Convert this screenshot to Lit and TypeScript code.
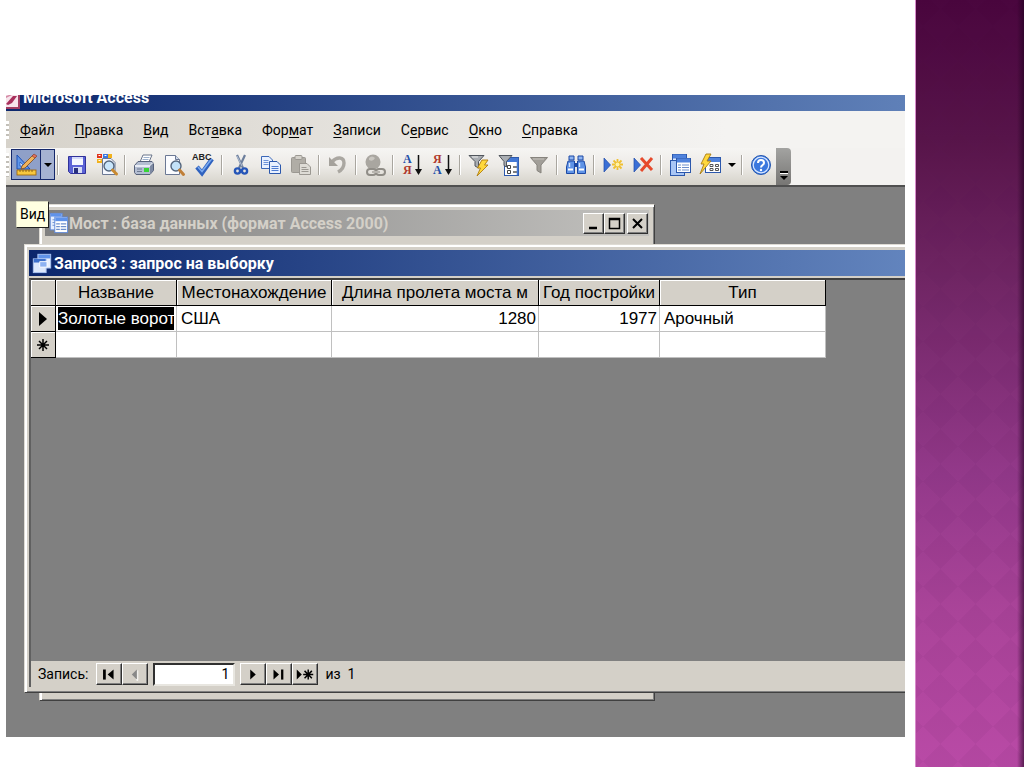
import { LitElement, html, svg, css, nothing } from "lit";
import { customElement } from "lit/decorators.js";

const grey = "#9b9892";

const icons: Record<string, unknown> = {
  design: svg`<path d="M3 2V16H16Z" fill="#5f97ea" stroke="#1c4fb4"/><path d="M6 9V13H10Z" fill="#d8e8ff" stroke="#1c4fb4" stroke-width=".7"/><path d="M8 13L19 2L22 4L11 15L7 16Z" fill="#f0b45c" stroke="#7a4a20" stroke-width=".8"/><path d="M18 3L20 1L23 3L21 5Z" fill="#e0705c" stroke="#803828" stroke-width=".6"/><rect x="3" y="17" width="19" height="5" fill="#f7c840" stroke="#a06a10" stroke-width=".9"/><path d="M6 17v2M9 17v2M12 17v2M15 17v2M18 17v2" stroke="#7a5010" stroke-width=".8"/>`,
  save: svg`<path d="M3.500 3.500H20.500V20.500H5.500L3.500 18.500Z" fill="#5b62d6" stroke="#30329a"/><rect x="7" y="4" width="11" height="8" fill="#f4f6ff"/><path d="M7 5h11" stroke="#b4bdf2"/><rect x="8" y="14" width="9" height="6" fill="#d5dbf5"/><rect x="9" y="15" width="4" height="5" fill="#28307e"/>`,
  fileSearch: svg`<path d="M7.500 5.500H16L20 9.500V21.500H7.500Z" fill="#f5f8ff" stroke="#6b7894"/><rect x="2" y="1" width="5" height="4" fill="#e0341c"/><rect x="8" y="1" width="5" height="4" fill="#3c78e0"/><rect x="2" y="6" width="5" height="4" fill="#f2b21c"/><rect x="13" y="1" width="4" height="4" fill="#f2b21c"/><path d="M3.500 2.500h2M3.500 7.500h2M9.500 2.500h2" stroke="#fff"/><circle cx="14" cy="13" r="5" fill="#c9e6fb" stroke="#53657d" stroke-width="1.400"/><path d="M17.500 17L21.500 21" stroke="#c98a30" stroke-width="3" stroke-linecap="round"/>`,
  print: svg`<path d="M8 9L11 2H20L17 9" fill="#fff" stroke="#69748a"/><path d="M11.500 4.500h6M10.500 6.500h6" stroke="#9cb0cc"/><path d="M2.500 12.500L6 8.500H20L21.500 10.500V17.500L18 21.500H4L2.500 19.500Z" fill="#b4bed2" stroke="#56617a"/><path d="M3 13H18L21 10" fill="none" stroke="#f9fbff" stroke-width="1.400"/><path d="M18 13V21L21 17.500V10Z" fill="#7d89a2"/><rect x="12" y="15" width="5" height="4" fill="#37d437"/><path d="M5 16h5M5 18.500h5" stroke="#6f7b92"/>`,
  preview: svg`<path d="M3.500 2.500H13.500L17.500 6.500V21.500H3.500Z" fill="#fbfcff" stroke="#6b7894"/><path d="M13.500 2.500V6.500H17.500" fill="#cfd9ea" stroke="#6b7894"/><circle cx="14" cy="13" r="5" fill="#c2e1f8" stroke="#53657d" stroke-width="1.400"/><path d="M17.500 17L21.500 21.500" stroke="#c07f38" stroke-width="3" stroke-linecap="round"/>`,
  spell: svg`<path d="M5 14L10 20L20 6" fill="none" stroke="#2f62bf" stroke-width="4.500"/><path d="M6 14L10 18.500L19.500 6" fill="none" stroke="#7baaf0" stroke-width="1.600"/><text x="0" y="7" font-size="9" font-weight="700" font-family="Liberation Sans, sans-serif" fill="#222">ABC</text>`,
  cut: svg`<path d="M8 2L14 15M16 2L10 15" stroke="#6d7f9c" stroke-width="2.200"/><path d="M8 3L13 13" stroke="#c6d2e4" stroke-width=".8"/><circle cx="8.500" cy="18" r="2.600" fill="none" stroke="#2656b8" stroke-width="2.400"/><circle cx="15.500" cy="18" r="2.600" fill="none" stroke="#2656b8" stroke-width="2.400"/>`,
  copy: svg`<path d="M2.500 3.500H10L13.500 7V15.500H2.500Z" fill="#e9f1ff" stroke="#3c68b8"/><path d="M4.500 7.500h5M4.500 9.500h5M4.500 11.500h5" stroke="#6d93d8"/><path d="M10.500 8.500H18L21.500 12V20.500H10.500Z" fill="#e9f1ff" stroke="#2c58ac"/><path d="M12.500 13.500h7M12.500 15.500h7M12.500 17.500h7" stroke="#4f7cd0"/>`,
  paste: svg`<rect x="2.500" y="4.500" width="14" height="15" rx="1" fill="#b0ada6" stroke="${grey}"/><rect x="6" y="2.500" width="7" height="4" rx="1" fill="#d4d1ca" stroke="${grey}"/><path d="M10.500 10.500H18L21.500 14V21.500H10.500Z" fill="#dedcd6" stroke="${grey}"/><path d="M12.500 14.500h5M12.500 16.500h7M12.500 18.500h7" stroke="${grey}"/>`,
  undo: svg`<path d="M6 9C11 3 18 4 18 10C18 14 16 17 12 19" fill="none" stroke="#aaa7a1" stroke-width="3.400"/><path d="M3 4V13H12Z" fill="#a5a29c"/>`,
  link: svg`<circle cx="10" cy="9" r="7.500" fill="#a9a6a0"/><path d="M6 5q3-3 6 0q-2 4-6 2z" fill="#c9c6c0"/><rect x="4" y="16" width="9" height="6" rx="3" fill="none" stroke="#908d87" stroke-width="2"/><rect x="13" y="16" width="9" height="6" rx="3" fill="none" stroke="#908d87" stroke-width="2"/><path d="M9 19h8" stroke="#b8b5af" stroke-width="2"/>`,
  sortAsc: svg`<text x="3" y="10" font-size="12" font-weight="700" font-family="Liberation Serif, serif" fill="#244fa8">А</text><text x="3" y="21" font-size="12" font-weight="700" font-family="Liberation Serif, serif" fill="#b0382e">Я</text><path d="M18.500 2V20" stroke="#111" stroke-width="1.500"/><path d="M15 16H22L18.500 22Z" fill="#111"/>`,
  sortDesc: svg`<text x="3" y="10" font-size="12" font-weight="700" font-family="Liberation Serif, serif" fill="#b0382e">Я</text><text x="3" y="21" font-size="12" font-weight="700" font-family="Liberation Serif, serif" fill="#244fa8">А</text><path d="M18.500 2V20" stroke="#111" stroke-width="1.500"/><path d="M15 16H22L18.500 22Z" fill="#111"/>`,
  filterSel: svg`<path d="M2 2.500H17L11.500 8.500V15L8 13V8.500Z" fill="#a9adb2" stroke="#50555c"/><path d="M5 4h6" stroke="#eee"/><path d="M15 7H21L17.500 12H21L10 23L13.500 15H10.500Z" fill="#ffd83c" stroke="#b07d10" stroke-width=".9"/>`,
  filterForm: svg`<rect x="7.500" y="4.500" width="14" height="18" fill="#fff" stroke="#2c58ac"/><path d="M8 7H21" stroke="#4478d4" stroke-width="4"/><path d="M10.500 12.500h3v3h-3zM10.500 17.500h3v3h-3z" fill="none" stroke="#444"/><path d="M16 14h4M16 19h4" stroke="#555" stroke-width="1.500"/><path d="M20.500 5v17" stroke="#4478d4" stroke-width="1.500"/><path d="M2 2.500H15L9.500 8.500V14L7 12.500V8.500Z" fill="#a9adb2" stroke="#50555c"/>`,
  funnel: svg`<path d="M3.500 4.500H20.500L14 12V20L10 17.500V12Z" fill="#a19e98" stroke="#86837d"/><path d="M6 6H17" stroke="#c5c2bc"/>`,
  find: svg`<path d="M5 3h5v4h-5zM14 3h5v4h-5z" fill="#8db4f2" stroke="#1d49a4"/><path d="M4 8H10.500V20.500H2.500V14ZM13.500 8H20L21.500 14V20.500H13.500Z" fill="#5f93e6" stroke="#1d49a4"/><rect x="10" y="10" width="4" height="4" fill="#1d49a4"/><path d="M4 16.500h5M15 16.500h5" stroke="#fff" stroke-width="2"/><path d="M5.500 10v4M15.500 10v4" stroke="#d8e7ff" stroke-width="1.400"/>`,
  newRec: svg`<path d="M3 5L9.500 12L3 19Z" fill="#3a6fd6" stroke="#1f4ba8" stroke-width=".7"/><path d="M16.500 6V17M11 11.500H22M12.500 7.500L20.500 15.500M20.500 7.500L12.500 15.500" stroke="#efc030" stroke-width="1.800"/><circle cx="16.500" cy="11.500" r="2" fill="#fff3a8"/>`,
  delRec: svg`<path d="M3 5L9.500 12L3 19Z" fill="#3a6fd6" stroke="#1f4ba8" stroke-width=".7"/><path d="M10 5L21 17M21 5L10 18" stroke="#e64a2c" stroke-width="3"/>`,
  dbWin: svg`<rect x="4.500" y="1.500" width="14" height="15" fill="#dce8fc" stroke="#2c58ac"/><path d="M5 3.500h13" stroke="#4f82dc" stroke-width="4"/><rect x="2.500" y="7.500" width="14" height="15" fill="#a9c6f5" stroke="#2c58ac"/><rect x="8.500" y="5.500" width="14" height="14" fill="#fff" stroke="#2c58ac"/><path d="M9 7.500h13" stroke="#4f82dc" stroke-width="4"/><path d="M10 12h3M14 12h7M10 14.500h3M14 14.500h7M10 17h3M14 17h7" stroke="#6c8fcc"/>`,
  newObj: svg`<rect x="7.500" y="4.500" width="15" height="15" fill="#fff" stroke="#2c58ac"/><path d="M8 7h14" stroke="#4f82dc" stroke-width="4"/><path d="M12 11.500h3v2h-3zM12 15.500h3v2h-3zM17.500 11.500h3v2h-3zM17.500 15.500h3v2h-3z" fill="none" stroke="#555"/><path d="M8 1H13L9 8H13L2 21L6 11H3Z" fill="#ffd83c" stroke="#a87a12" stroke-width=".9"/>`,
  help: svg`<circle cx="12" cy="12" r="9.500" fill="#3b78de" stroke="#2456ae"/><circle cx="12" cy="12" r="7.800" fill="none" stroke="#dce9ff" stroke-width="1.200"/><path d="M9 10C9 6 15 6 15 10C15 12 12 12 12 14.500" fill="none" stroke="#fff" stroke-width="2"/><circle cx="12" cy="17" r="1.200" fill="#fff"/>`,
  dbDoc: svg`<rect x="3.500" y="1.500" width="13" height="18" fill="#e6effe" stroke="#5b86d8"/><path d="M4 3.500h12" stroke="#5f93ea" stroke-width="3"/><path d="M6 8.500h3M6 11.500h3M6 14.500h3" stroke="#6c8fcc"/><rect x="8.500" y="5.500" width="14" height="17" fill="#fff" stroke="#5b86d8"/><path d="M9 8h13" stroke="#5f93ea" stroke-width="4"/><path d="M10 13h4M15 13h6M10 16h4M15 16h6M10 19h4M15 19h6" stroke="#6c8fcc" stroke-width="1.500"/>`,
  query: svg`<rect x="7.500" y="2.500" width="14" height="15" fill="#e8f0fe" stroke="#a9c4f3"/><path d="M8 5h13" stroke="#5f93ea" stroke-width="4"/><rect x="2.500" y="7.500" width="14" height="15" fill="#dce8fc" stroke="#a9c4f3"/><path d="M3 9.500h13" stroke="#3d70cc" stroke-width="4"/><path d="M9.500 10.500h8v6h-8z" fill="#8db2f2" stroke="#fff"/>`,
  first: svg`<path d="M7 6v11" stroke="#000" stroke-width="3"/><path d="M17 6V17L10.500 11.500Z"/>`,
  prev: svg`<path d="M14 6V17L8.500 11.500Z" fill="#888"/><path d="M15 7V18L13 17" fill="none" stroke="#fff"/>`,
  next: svg`<path d="M9 6V17L15 11.500Z"/>`,
  last: svg`<path d="M6 6V17L12 11.500Z"/><path d="M15.500 6v11" stroke="#000" stroke-width="2.500"/>`,
  fresh: svg`<path d="M3 6V17L8.500 11.500Z"/><path d="M15.500 6v11M10 11.500h11M11.500 7.500l8 8M19.500 7.500l-8 8" stroke="#000" stroke-width="1.600"/>`,
};

const icon = (name: string, size = 24) =>
  html`<svg class="icon" width=${size} height=${size} viewBox="0 0 24 24" aria-hidden="true">${icons[name]}</svg>`;

const menu: [string, string, string][] = [
  ["", "Ф", "айл"],
  ["", "П", "равка"],
  ["", "В", "ид"],
  ["Вст", "а", "вка"],
  ["Фор", "м", "ат"],
  ["", "З", "аписи"],
  ["С", "е", "рвис"],
  ["", "О", "кно"],
  ["", "С", "правка"],
];

const groups: [string, string][][] = [
  [["save", "Сохранить"], ["fileSearch", "Поиск файлов"]],
  [["print", "Печать"], ["preview", "Просмотр"], ["spell", "Орфография"]],
  [["cut", "Вырезать"], ["copy", "Копировать"], ["paste", "Вставить"]],
  [["undo", "Отменить"]],
  [["link", "Гиперссылка"]],
  [["sortAsc", "По возрастанию"], ["sortDesc", "По убыванию"]],
  [["filterSel", "Фильтр по выделенному"], ["filterForm", "Изменить фильтр"], ["funnel", "Применить фильтр"]],
  [["find", "Найти"]],
  [["newRec", "Новая запись"], ["delRec", "Удалить запись"]],
  [["dbWin", "Окно базы данных"], ["newObj", "Новый объект"]],
];

@customElement("app-root")
export class AppRoot extends LitElement {
  static styles = css`
    :host {
      display: block;
      font-family: Roboto, "Noto Sans", sans-serif;
      font-size: 14px;
      color: #000;
    }
    * { box-sizing: border-box; }
    button, input { font: inherit; color: inherit; margin: 0; padding: 0; border-radius: 0; }
    button { background: none; border: 0; }
    .icon { display: block; flex: none; overflow: visible; }
    .slide {
      display: grid;
      grid-template-columns: minmax(0, 1fr) 109px;
      height: 100vh;
      background: #fff;
    }
    .stage { display: flex; padding: 95px 10px 30px 6px; }
    .access {
      flex: 1;
      min-width: 0;
      display: flex;
      flex-direction: column;
      overflow: hidden;
      background: #808080;
    }
    .side { position: relative; background: linear-gradient(#49053d, #571449 18%, #6f2563 36%, #93398a 62%, #aa4499 80%, #b94aa6); border-left: 1px solid #d88acb; }
    .weave { display: block; width: 100%; height: 100%; }
    .shade { position: absolute; top: 0; right: 0; bottom: 0; width: 7px; background: linear-gradient(90deg, transparent, rgba(30, 0, 30, 0.6)); }

    .apptitle {
      display: flex;
      gap: 3px;
      flex: none;
      height: 16px;
      overflow: hidden;
      color: #fff;
      font-size: 16px;
      font-weight: 700;
      background: linear-gradient(90deg, #0c276c, #5f80b8);
    }
    .apptitle .name { line-height: 6px; }
    .menubar {
      display: flex;
      align-items: center;
      gap: 20px;
      flex: none;
      height: 37px;
      padding-left: 14px;
      background: linear-gradient(90deg, #d6d2ca, #f4f3f1 80%);
      position: relative;
    }
    .grip { width: 3px; height: 18px; background: repeating-linear-gradient(#fff 0 3px, #c2bfb8 3px 5px); flex: none; }
    .menubar .grip { position: absolute; left: 0; }
    .menubar u { text-underline-offset: 2px; }
    .barrow { flex: none; height: 39px; background: #f3f2f0; border-bottom: 2px solid #505050; display: flex; }
    .toolbar {
      display: flex;
      align-items: center;
      padding-bottom: 4px;
      background: linear-gradient(#f6f5f3, #eceae6 50%, #d5d2ca);
      border-radius: 0 4px 4px 0;
    }
    .toolbar .grip { margin-right: 2px; height: 24px; }
    .view { display: flex; height: 31px; border: 1px solid #15286b; background: #8fa0c8; }
    .view button { display: grid; place-items: center; width: 28px; }
    .view .drop { width: 14px; border-left: 1px solid #15286b; background: #a5b2d2; }
    .caret { border: 4px solid transparent; border-top-color: #000; border-bottom: 0; }
    .tool { display: grid; place-items: center; width: 30px; height: 30px; }
    .sep { width: 2px; height: 20px; margin: 0 3px 0 2px; background: linear-gradient(90deg, #a9a69f 50%, #fff 50%); }
    .drop.plain { width: 14px; display: grid; place-items: center; height: 30px; }
    .cap {
      align-self: stretch;
      width: 15px;
      margin-bottom: -4px;
      background: linear-gradient(#a3a3a1, #777674);
      border-radius: 0 4px 4px 0;
      display: flex;
      flex-direction: column;
      justify-content: flex-end;
      align-items: center;
      gap: 2px;
      padding-bottom: 5px;
    }
    .cap i { width: 8px; height: 2px; background: #000; border-bottom: 1px solid #fff; box-sizing: content-box; }

    .desk { position: relative; flex: 1; min-height: 0; }
    .win {
      position: absolute;
      display: flex;
      flex-direction: column;
      background: #d4d0c8;
      border: 1px solid;
      border-color: #dedbd4 #404040 #404040 #dedbd4;
      box-shadow: inset 2px 2px #fff, inset -1px -1px #808080;
    }
    .db { left: 33px; top: 17px; bottom: 36px; width: 616px; padding: 5px; }
    .query { left: 18px; right: -60px; top: 57px; bottom: 44px; padding: 5px 3px 5px 4px; }
    .bar { display: flex; align-items: center; height: 26px; flex: none; font-weight: 700; white-space: nowrap; }
    .bar h2 { margin: 0; font-size: 16px; flex: 1; }
    .db .bar { background: linear-gradient(90deg, #808080, #c2c1be); color: #d4d0c8; padding: 0 1px 0 2px; }
    .query .bar { background: linear-gradient(90deg, #0b266c, #6486bf 96%); color: #fff; padding-left: 2px; gap: 1px; }
    .boxes { display: flex; }
    .face {
      display: grid;
      place-items: center;
      background: #d4d0c8;
      border: 1px solid;
      border-color: #fff #303030 #303030 #fff;
      box-shadow: inset -1px -1px #808080;
    }
    .boxes .face { width: 21px; height: 21px; }
    .boxes .face:last-child { margin-left: 2px; }
    .client {
      flex: 1;
      min-height: 0;
      display: flex;
      flex-direction: column;
      margin-top: 2px;
      background: #808080;
      border-left: 2px solid #606060;
      border-top: 2px solid #404040;
    }
    .sheet { flex: 1; min-height: 0; }
    table {
      border-collapse: separate;
      border-spacing: 0;
      table-layout: fixed;
      width: 795px;
      font-family: "Liberation Sans", sans-serif;
      font-size: 17px;
      line-height: 23px;
    }
    th, td { height: 26px; padding: 0 2px 0 4px; overflow: hidden; white-space: nowrap; }
    th { font-weight: 400; background: #d4d0c8; padding: 0 2px; border-right: 1px solid #000; border-bottom: 1px solid #000; box-shadow: inset 1px 1px #fff; }
    td { background: #fff; text-align: left; border-right: 1px solid #c0c0c0; border-bottom: 1px solid #c0c0c0; }
    td.num { text-align: right; }
    td.on { padding: 0 2px; }
    td.on span { display: block; background: #000; color: #fff; overflow: hidden; }
    th svg { display: block; margin: auto; }
    .sel { width: 25px; }
    .c1 { width: 121px; }
    .c2 { width: 155px; }
    .c3 { width: 207px; }
    .c4 { width: 121px; }
    .c5 { width: 166px; }
    .nav { display: flex; align-items: center; flex: none; height: 26px; background: #d4d0c8; padding-left: 7px; }
    .nav label { margin-right: 8px; }
    .nav .face { width: 26px; height: 22px; }
    .nav input {
      width: 82px;
      height: 23px;
      margin: 0 5px;
      padding-right: 4px;
      text-align: right;
      background: #fff;
      border: 2px solid;
      border-color: #303030 #e8e6e0 #e8e6e0 #303030;
    }
    .nav .of { margin-left: 7px; }
    .tip {
      position: absolute;
      left: 10px;
      top: 14px;
      padding: 0 3px;
      line-height: 25px;
      background: #ffffe1;
      border: 1px solid;
      border-color: #d8d8c0 #202020 #202020 #d8d8c0;
    }
  `;

  render() {
    const heads = ["Название", "Местонахождение", "Длина пролета моста м", "Год постройки", "Тип"];
    return html`
      <div class="slide">
        <div class="stage">
          <section class="access" aria-label="Microsoft Access">
            <header class="apptitle">
              <svg class="applogo" width="14" height="14" viewBox="0 0 14 14" aria-hidden="true">
                <rect width="14" height="14" fill="#a23c62" /><rect width="12" height="12" fill="#f6e3ea" />
                <path d="M0 9L7 1H11L6 8L2 10Z" fill="#a8305c" /><path d="M0 3L6 0H3L0 1Z" fill="#d48aa6" />
              </svg>
              <span class="name">Microsoft Access</span>
            </header>
            <nav class="menubar">
              <span class="grip"></span>
              ${menu.map(([a, k, b]) => html`<button>${a}<u>${k}</u>${b}</button>`)}
            </nav>
            <div class="barrow">
              <div class="toolbar">
                <span class="grip"></span>
                <span class="view">
                  <button aria-label="Вид">${icon("design")}</button>
                  <button class="drop" aria-label="Выбор вида"><span class="caret"></span></button>
                </span>
                ${groups.map(
                  (g) => html`<span class="sep"></span>${g.map(
                      ([n, l]) => html`<button class="tool" aria-label=${l}>${icon(n)}</button>`
                    )}`
                )}
                <button class="drop plain" aria-label="Другие объекты"><span class="caret"></span></button>
                <span class="sep"></span>
                <button class="tool" aria-label="Справка">${icon("help")}</button>
                <button class="cap" aria-label="Параметры панели"><i></i><span class="caret"></span></button>
              </div>
            </div>
            <div class="desk">
              <section class="win db">
                <div class="bar">
                  ${icon("dbDoc", 22)}
                  <h2>Мост : база данных (формат Access 2000)</h2>
                  <span class="boxes">
                    <button class="face" aria-label="Свернуть"><svg width="15" height="15"><path d="M3 12h8" stroke="#000" stroke-width="2.500" /></svg></button>
                    <button class="face" aria-label="Развернуть"><svg width="15" height="15"><path d="M2.500 2.500h10v10h-10zM2 3.500h11" fill="none" stroke="#000" stroke-width="1.500" /></svg></button>
                    <button class="face" aria-label="Закрыть"><svg width="15" height="15"><path d="M3 3L12 12M12 3L3 12" stroke="#000" stroke-width="2" /></svg></button>
                  </span>
                </div>
              </section>
              <section class="win query">
                <div class="bar">${icon("query", 22)}<h2>Запрос3 : запрос на выборку</h2></div>
                <div class="client">
                  <div class="sheet">
                    <table>
                      <thead>
                        <tr>
                          <th class="sel"></th>
                          ${heads.map((h, i) => html`<th class="c${i + 1}" scope="col">${h}</th>`)}
                        </tr>
                      </thead>
                      <tbody>
                        <tr>
                          <th scope="row" aria-label="Текущая запись"><svg width="12" height="16"><path d="M2 1V15L10 8Z" /></svg></th>
                          <td class="on"><span>Золотые ворота</span></td>
                          <td>США</td>
                          <td class="num">1280</td>
                          <td class="num">1977</td>
                          <td>Арочный</td>
                        </tr>
                        <tr>
                          <th scope="row" aria-label="Новая запись"><svg width="14" height="14"><path d="M7 1v12M1 7h12M3 3l8 8M11 3l-8 8" stroke="#000" stroke-width="1.500" /></svg></th>
                          ${heads.map(() => html`<td>${nothing}</td>`)}
                        </tr>
                      </tbody>
                    </table>
                  </div>
                  <div class="nav">
                    <label for="rec">Запись:</label>
                    <button class="face" aria-label="Первая">${icon("first", 22)}</button>
                    <button class="face" aria-label="Предыдущая">${icon("prev", 22)}</button>
                    <input id="rec" value="1" />
                    <button class="face" aria-label="Следующая">${icon("next", 22)}</button>
                    <button class="face" aria-label="Последняя">${icon("last", 22)}</button>
                    <button class="face" aria-label="Новая">${icon("fresh", 22)}</button>
                    <span class="of">из&nbsp; 1</span>
                  </div>
                </div>
              </section>
              <div class="tip" role="tooltip">Вид</div>
            </div>
          </section>
        </div>
        <aside class="side">
          <svg class="weave" aria-hidden="true">
            <defs>
              <pattern id="w" x="7" y="9" width="35" height="35" patternUnits="userSpaceOnUse">
                <path d="M17.500 0L35 17.500L17.500 35L0 17.500Z" fill="#501050" fill-opacity=".06" />
              </pattern>
            </defs>
            <rect width="100%" height="100%" fill="url(#w)" />
          </svg>
          <div class="shade"></div>
        </aside>
      </div>
    `;
  }
}
